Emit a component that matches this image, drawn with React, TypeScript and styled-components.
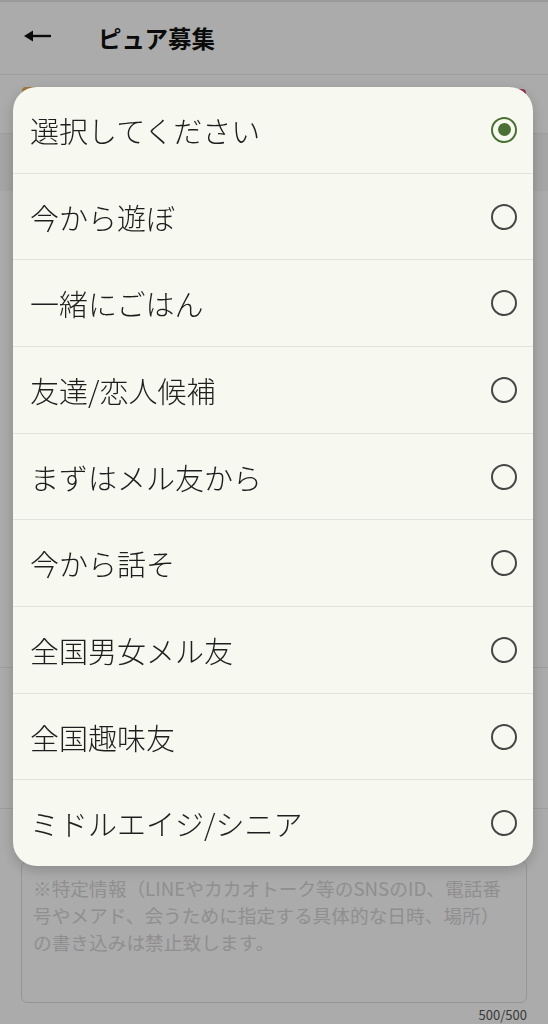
import { useState } from 'react';
import styled, { createGlobalStyle } from 'styled-components';

const GlobalStyle = createGlobalStyle`
  html, body {
    margin: 0;
    padding: 0;
    background: #ffffff;
    font-family: 'Noto Sans CJK JP', 'Noto Sans', sans-serif;
  }
`;

const Page = styled.div`
  width: 548px;
  height: 1024px;
  display: flex;
  flex-direction: column;
  background: #ffffff;
  overflow: hidden;
`;

const StatusLine = styled.div`
  height: 2px;
  background: #e6e6e6;
`;

const Header = styled.header`
  height: 73px;
  display: flex;
  align-items: center;
  gap: 47px;
  padding: 0 0 0 24px;
  border-bottom: 1px solid #ececec;
`;

const BackIcon = styled.svg`
  display: block;
  margin-top: -4px;
`;

const Title = styled.h1`
  margin: 0;
  font-size: 23.5px;
  font-weight: 700;
  color: #111;
`;

const TabRow = styled.div`
  height: 47px;
  display: flex;
  align-items: flex-start;
  justify-content: space-between;
  padding: 12px 22px 0 22px;
  border-bottom: 1px solid #ececec;
`;

const Chip = styled.div<{ $color: string; $top: number }>`
  width: 60px;
  height: 28px;
  margin-top: ${(p) => p.$top}px;
  border-radius: 4px;
  background: ${(p) => p.$color};
`;

const Band = styled.div`
  height: 58px;
  background: #f6f6f6;
`;

const Section = styled.div<{ $height: number }>`
  height: ${(p) => p.$height}px;
  border-bottom: 1px solid #ececec;
`;

const TextAreaWrap = styled.div`
  display: flex;
  flex-direction: column;
  padding: 52px 21px 0 21px;
`;

const TextArea = styled.div`
  height: 128px;
  border: 1px solid #e0e0e0;
  border-radius: 6px;
  padding: 12px 24px 0 11px;
  font-size: 18.7px;
  line-height: 27px;
  color: #d6d6d6;
`;

const Counter = styled.div`
  align-self: flex-end;
  margin-top: 2px;
  font-size: 13px;
  color: #555;
`;

const Overlay = styled.div`
  position: fixed;
  inset: 0;
  background: rgba(0, 0, 0, 0.33);
  display: flex;
  justify-content: center;
  padding-top: 87px;
`;

const Dialog = styled.div`
  width: 520px;
  height: 779px;
  margin-left: -2px;
  background: #f7f8f0;
  border-radius: 24px;
  box-shadow: 0 4px 14px rgba(0, 0, 0, 0.2);
  overflow: hidden;
  display: flex;
  flex-direction: column;
`;

const Option = styled.label`
  flex: 1;
  display: flex;
  align-items: center;
  justify-content: space-between;
  padding: 0 16px 0 17px;
  font-size: 29px;
  font-weight: 300;
  color: #1e1e1e;
  cursor: pointer;
  & + & {
    border-top: 1.5px solid #e2e3dc;
  }
`;

const Radio = styled.span<{ $checked: boolean }>`
  width: 26px;
  height: 26px;
  box-sizing: border-box;
  border-radius: 50%;
  border: 2.5px solid ${(p) => (p.$checked ? '#4a7133' : '#464646')};
  display: flex;
  align-items: center;
  justify-content: center;
  &::after {
    content: '';
    width: 13px;
    height: 13px;
    border-radius: 50%;
    background: ${(p) => (p.$checked ? '#4a7133' : 'transparent')};
  }
`;

const options = [
  '選択してください',
  '今から遊ぼ',
  '一緒にごはん',
  '友達/恋人候補',
  'まずはメル友から',
  '今から話そ',
  '全国男女メル友',
  '全国趣味友',
  'ミドルエイジ/シニア',
];

const App = () => {
  const [selected, setSelected] = useState(0);
  return (
    <>
      <GlobalStyle />
      <Page>
        <StatusLine />
        <Header>
          <BackIcon width="27" height="14" viewBox="0 0 27 14">
            <path d="M0 7 L9 1.5 L9 12.5 Z" fill="#111" />
            <line x1="7" y1="7" x2="27" y2="7" stroke="#111" strokeWidth="2.4" />
          </BackIcon>
          <Title>ピュア募集</Title>
        </Header>
        <TabRow>
          <Chip $color="#f2b25c" $top={0} />
          <Chip $color="#e8457a" $top={2} />
        </TabRow>
        <Band />
        <Section $height={483} />
        <Section $height={142} />
        <TextAreaWrap>
          <TextArea>
            ※特定情報（LINEやカカオトーク等のSNSのID、電話番号やメアド、会うために指定する具体的な日時、場所）の書き込みは禁止致します。
          </TextArea>
          <Counter>500/500</Counter>
        </TextAreaWrap>
      </Page>
      <Overlay>
        <Dialog>
          {options.map((o, i) => (
            <Option key={o} onClick={() => setSelected(i)}>
              <span>{o}</span>
              <Radio $checked={selected === i} />
            </Option>
          ))}
        </Dialog>
      </Overlay>
    </>
  );
};

export default App;
